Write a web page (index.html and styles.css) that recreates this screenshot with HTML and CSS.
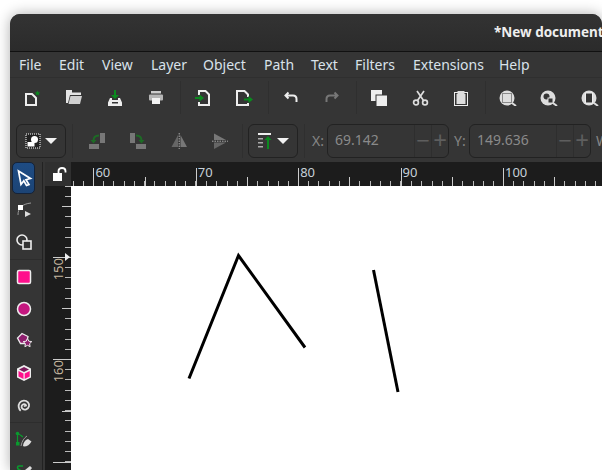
FILE: index.html
```html
<!DOCTYPE html>
<html lang="en">
<head>
  <meta charset="UTF-8">
  <title>New document - Inkscape</title>
  <link rel="stylesheet" href="styles.css">
</head>
<body>

<div class="window">

  <div class="titlebar">*New document 1 - Inkscape</div>

  <div class="menubar">
    <span>File</span><span>Edit</span><span>View</span><span>Layer</span><span>Object</span><span>Path</span><span>Text</span><span>Filters</span><span>Extensions</span><span>Help</span>
  </div>

  <!-- command bar -->
  <div class="commands">
    <button class="cmd"><svg width="18" height="18" viewBox="1.500 0 18 18"><path d="M3.500 6h6l4 4v7h-10z" fill="none" stroke="#eee" stroke-width="2"/><path d="M15 2.500l.8 1.700 1.900.2-1.400 1.300.4 1.900-1.700-1-1.700 1 .4-1.900-1.400-1.300 1.900-.2z" fill="#0a8a1e"/></svg></button>
    <button class="cmd"><svg width="18" height="18" viewBox="0 0 18 18"><path d="M1 2h6v2.500h9V7H5L3 15H1z" fill="#e4e4e4"/><path d="M5.500 8H17l-2 8H3.500z" fill="#cfcfcf"/></svg></button>
    <button class="cmd"><svg width="18" height="18" viewBox="0 0 18 18"><path d="M4 10h2v2h6v-2h2l2 4.500V18H2v-3.500z" fill="#eee"/><rect x="6" y="14" width="6" height="1.500" fill="#353535"/><path d="M8 2h2v5h3l-4 4-4-4h3z" fill="#0a8a1e"/></svg></button>
    <button class="cmd"><svg width="18" height="18" viewBox="0 0 18 18"><rect x="4" y="3" width="10" height="2.500" fill="#ccc"/><rect x="2" y="6.500" width="14" height="6" rx="1" fill="#b5b5b5"/><rect x="5" y="10" width="8" height="6" fill="#f2f2f2"/></svg></button>
    <i class="sep"></i>
    <button class="cmd"><svg width="18" height="18" viewBox="0 0 18 18"><path d="M5 7V3h6.500L15 6.500V17H5v-3" fill="none" stroke="#eee" stroke-width="2"/><path d="M1 9h4.500V6.500L10 10l-4.500 3.500V11H1z" fill="#0a8a1e"/></svg></button>
    <button class="cmd"><svg width="18" height="18" viewBox="0 0 18 18"><path d="M13 9V6.500L9.500 3H2v14h11v-2" fill="none" stroke="#eee" stroke-width="2"/><path d="M9 10.500h4.500V8l4.500 3.500-4.500 3.500v-2.500H9z" fill="#0a8a1e"/></svg></button>
    <i class="sep"></i>
    <button class="cmd"><svg width="18" height="18" viewBox="0 0 18 18"><path d="M6.500 4.500L3.500 7.500l3 3M3.500 7.500H11c2.200 0 3.500 1.500 3.500 3.500v3" fill="none" stroke="#eee" stroke-width="2"/></svg></button>
    <button class="cmd"><svg width="18" height="18" viewBox="0 0 18 18"><path d="M11.500 4.500l3 3-3 3M14.500 7.500H7C4.800 7.500 3.500 9 3.500 11v3" fill="none" stroke="#777" stroke-width="2"/></svg></button>
    <i class="sep"></i>
    <button class="cmd"><svg width="18" height="18" viewBox="0 0 18 18"><rect x="1" y="2" width="11" height="11" fill="#eee"/><rect x="6" y="7" width="11.500" height="11.500" fill="#eee" stroke="#353535"/></svg></button>
    <button class="cmd"><svg width="18" height="18" viewBox="0 0 18 18"><g fill="none" stroke="#ddd" stroke-width="1.700"><circle cx="5" cy="14.500" r="2.400"/><circle cx="14" cy="14.500" r="2.400"/><path d="M6.500 12.500L13 3M12.500 12.500L6 3"/></g></svg></button>
    <button class="cmd"><svg width="18" height="18" viewBox="0 0 18 18"><rect x="2.500" y="4.500" width="13" height="13" fill="none" stroke="#eee"/><rect x="4.500" y="6" width="9" height="10" fill="#ddd"/><rect x="5.500" y="3" width="7" height="3" fill="#ddd"/></svg></button>
    <i class="sep"></i>
    <button class="cmd"><svg width="18" height="18" viewBox="0 0 18 18"><circle cx="8" cy="10" r="7.500" fill="#ddd"/><path d="M13 15l4 3" stroke="#ddd" stroke-width="2"/><rect x="3.500" y="5.500" width="9" height="9" fill="none" stroke="#353535" stroke-dasharray="1 1"/></svg></button>
    <button class="cmd"><svg width="18" height="18" viewBox="0 0 18 18"><circle cx="8" cy="10" r="7.500" fill="#ddd"/><path d="M13 15l4 3" stroke="#ddd" stroke-width="2"/><circle cx="6.500" cy="8.500" r="3" fill="#353535"/><rect x="8" y="10" width="5" height="5" fill="#353535" stroke="#ddd"/></svg></button>
    <button class="cmd"><svg width="18" height="18" viewBox="0 0 18 18"><circle cx="8" cy="10" r="7.500" fill="#ddd"/><path d="M13 15l4 3" stroke="#ddd" stroke-width="2"/><rect x="4.500" y="5" width="7" height="10" fill="#353535" stroke="#eee"/></svg></button>
  </div>

  <!-- tool controls -->
  <div class="controls">
    <div class="dropbox">
      <svg width="16" height="16" viewBox="0 0 16 16"><rect x="1" y="1" width="14" height="14" fill="#222" stroke="#fff" stroke-dasharray="1 1"/><circle cx="9.500" cy="6.500" r="3.500" fill="#fff"/><rect x="2.500" y="9" width="7" height="4.500" fill="#fff"/></svg>
      <i class="caret"></i>
    </div>
    <i class="sep"></i>
    <button class="ctl"><svg width="18" height="18" viewBox="0 0 18 18"><rect x="12" y="1" width="5" height="10" fill="#777"/><rect x="1" y="12" width="10" height="5" fill="#777"/><path d="M11 3.500C7.500 3.500 5.500 5.500 5.500 8.500" fill="none" stroke="#1d6b25" stroke-width="2"/><path d="M2.500 8h6l-3 3.500z" fill="#1d6b25"/></svg></button>
    <button class="ctl"><svg width="18" height="18" viewBox="0 0 18 18"><rect x="1" y="1" width="5" height="10" fill="#777"/><rect x="7" y="12" width="10" height="5" fill="#777"/><path d="M7 3.500c3.500 0 5.500 2 5.500 5" fill="none" stroke="#1d6b25" stroke-width="2"/><path d="M9.500 8h6l-3 3.500z" fill="#1d6b25"/></svg></button>
    <button class="ctl"><svg width="18" height="18" viewBox="0 0 18 18"><path d="M1.500 15L8 3v12z" fill="#666"/><path d="M10.500 3L17 15h-6.500z" fill="#777"/><path d="M9.200 1v16" stroke="#aaa" stroke-dasharray="1.500 1"/></svg></button>
    <button class="ctl"><svg width="18" height="18" viewBox="0 0 18 18"><path d="M3 1.500l12 6.500H3z" fill="#777"/><path d="M3 10.500h12L3 17z" fill="#666"/><path d="M1 9.200h16" stroke="#aaa" stroke-dasharray="1.500 1"/></svg></button>
    <i class="sep"></i>
    <div class="dropbox">
      <svg width="16" height="16" viewBox="0 0 16 16"><rect x="1" y="0" width="13" height="2" fill="#eee"/><path d="M1 5h5v1.500H1zM1 9h5v1.500H1zM1 13h5v1.500H1z" fill="#aaa"/><path d="M10 16V7H7.500L11 3l3.500 4H12v9z" fill="#0a8a1e"/></svg>
      <i class="caret"></i>
    </div>
    <i class="sep"></i>
    <label class="coord">X:</label>
    <div class="spin"><span class="val">69.142</span><span class="step">&minus;</span><span class="step">+</span></div>
    <label class="coord">Y:</label>
    <div class="spin"><span class="val">149.636</span><span class="step">&minus;</span><span class="step">+</span></div>
    <label class="coord">W:</label>
  </div>

  <div class="workspace">

    <!-- toolbox -->
    <div class="toolbox">
      <button class="tool active"><svg width="18" height="18" viewBox="0 0 18 18"><path d="M3.500 2l12 7.500-4.500 1.200 3 4.800-2.500 1-2.700-4.700L6 15.500z" fill="#1f4d85" stroke="#fff" stroke-width="1.700"/></svg></button>
      <button class="tool"><svg width="18" height="18" viewBox="0 0 18 18"><path d="M3 14C3 7 7 3 16 2" fill="none" stroke="#999"/><rect x="3" y="4" width="5" height="5" fill="#fff"/><path d="M10 10l6 3-6 3z" fill="#ddd"/></svg></button>
      <button class="tool"><svg width="18" height="18" viewBox="0 0 18 18"><circle cx="7" cy="7" r="5" fill="none" stroke="#eee" stroke-width="1.600"/><rect x="8" y="8" width="8" height="8" fill="#353535" stroke="#eee" stroke-width="1.600"/></svg></button>
      <i class="tool-sep"></i>
      <button class="tool"><svg width="18" height="18" viewBox="0 0 18 18"><rect x="2.500" y="2.500" width="13" height="13" rx="1.500" fill="#ff0f8c" stroke="#eee" stroke-width="1.500"/></svg></button>
      <button class="tool"><svg width="18" height="18" viewBox="0 0 18 18"><circle cx="9" cy="9" r="6.500" fill="#c4177f" stroke="#eee" stroke-width="1.500"/></svg></button>
      <button class="tool"><svg width="18" height="18" viewBox="0 0 18 18"><path d="M7 1.500l6 3-1.500 7h-6L2.500 6z" fill="#8f1f6e" stroke="#eee" stroke-width="1.300"/><path d="M12.500 6.500l1.300 2.700 3 .4-2.200 2.100.5 3-2.600-1.400-2.600 1.400.5-3L8.200 9.600l3-.4z" fill="#8f1f6e" stroke="#eee"/></svg></button>
      <button class="tool"><svg width="18" height="18" viewBox="0 0 18 18"><path d="M9 1l7 3.500v9L9 17l-7-3.500v-9z" fill="#eee"/><path d="M9 3L14 5.500 9 8 4 5.500z" fill="#7d1a5c"/><path d="M3.500 7l5 2.500v5.500l-5-2.500z" fill="#ff0f8c"/><path d="M9.700 9.500l5-2.500v5.500l-5 2.500z" fill="#ff0f8c"/></svg></button>
      <button class="tool"><svg width="18" height="18" viewBox="0 0 18 18"><path d="M9 10.500c1-1.500 2.500-.5 2-1.300-.6-1.500-3.500-1.400-4.300.6-.8 2.500 1.800 4.400 4.500 3.500 3-1 3.800-4.800 1.800-7-2.300-2.500-6.300-2.300-8.300.4-2 2.800-1 6.300 1 8" fill="none" stroke="#ddd" stroke-width="1.800"/></svg></button>
      <i class="tool-sep"></i>
      <button class="tool"><svg width="18" height="18" viewBox="0 0 18 18"><path d="M2.500 3v10M3 3c2 0 3 2 5 3" fill="none" stroke="#0a9a2e" stroke-width="1.200"/><circle cx="2.500" cy="2.500" r="1.800" fill="#0a9a2e"/><rect x="1" y="11" width="3.500" height="3.500" fill="#0a9a2e"/><path d="M8 15c0-3 2-6 5-7l3.500 2.500C15 13.500 12 15.500 9 15.500z" fill="#ddd"/><path d="M6 15C7 10 9 7 12 5" fill="none" stroke="#999"/></svg></button>
      <button class="tool"><svg width="18" height="18" viewBox="0 0 18 18"><path d="M8 3H4c-2 0-2 3 0 3.500s2 3.500 0 3.500H1" fill="none" stroke="#0a9a2e" stroke-width="1.600"/><path d="M10 7l5-4 2 2-4 5z" fill="#ddd"/></svg></button>
    </div>

    <div class="board">

      <div class="top-row">
        <div class="lock">
          <svg width="14" height="14" viewBox="0 0 14 14"><rect x="0" y="6" width="9" height="8" fill="#fff"/><path d="M5.500 6V4C5.500 2 7 1 9 1s3.500 1 3.500 3v1.500" fill="none" stroke="#fff" stroke-width="1.800"/></svg>
        </div>
        <div class="h-ruler">
          <div class="h-cell"></div>
          <div class="h-cell">60</div>
          <div class="h-cell">70</div>
          <div class="h-cell">80</div>
          <div class="h-cell">90</div>
          <div class="h-cell">100</div>
        </div>
      </div>

      <div class="main-row">
        <div class="v-ruler">
          <div class="v-cell"></div>
          <div class="v-cell"><span>150</span></div>
          <div class="v-cell"><span>160</span></div>
          <div class="v-cell"></div>
          <i class="pointer"></i>
        </div>
        <div class="canvas">
          <svg class="drawing" width="531" height="284" viewBox="0 0 531 284">
            <path d="M118 192.500L167.500 69.500 234 161.500" />
            <path d="M302.500 84L327 206" />
          </svg>
        </div>
      </div>

    </div>
  </div>
</div>

</body>
</html>
```

FILE: styles.css
```css
html, body { margin: 0; height: 470px; overflow: hidden; background: #fff; }
body { font-family: "Noto Sans", sans-serif; color: #ddd; }
button { border: 0; padding: 0; background: none; }
svg { display: block; }
i { display: block; }

.window {
  width: 592px; height: 456px; margin: 14px 0 0 10px;
  background: #353535; border-radius: 10px 10px 0 0; overflow: hidden;
  box-shadow: 0 0 14px rgba(0,0,0,.32);
}

.titlebar {
  height: 37px; line-height: 37px; padding-left: 484px; overflow: hidden;
  background: linear-gradient(#333, #2b2b2b); border-bottom: 1px solid #111;
  font-size: 13.5px; font-weight: 700; color: #eee; white-space: nowrap;
}

.menubar {
  display: grid; height: 25px; padding-left: 9px; line-height: 25px;
  grid-template-columns: 40px 43px 49px 52px 61px 47px 44px 58px 86px 50px;
  border-bottom: 1px solid #2f2f2f; font-size: 14px; color: #d9e2ea;
}

.commands { display: flex; height: 38px; padding-left: 2.5px; align-items: center; overflow: hidden; }
.cmd { flex: none; width: 41px; height: 38px; display: flex; align-items: center; justify-content: center; }
.sep { flex: none; width: 1px; height: 33px; margin: 0 2px 0 3px; background: #2f2f2f; }

.controls { display: flex; height: 46px; box-sizing: border-box; padding: 4px 0 0 6px; align-items: center; overflow: hidden; }
.controls .sep { margin: 0 7px 0 6px; height: 34px; }
.controls .dropbox:first-child + .sep { margin-right: 3px; }
.controls .ctl + .sep { margin: 0 5px 0 2px; }
.dropbox {
  flex: none; width: 50px; height: 34px; display: flex; align-items: center; gap: 4px; padding-left: 8px;
  box-sizing: border-box; border: 1px solid #222; border-radius: 6px;
}
.caret { width: 0; height: 0; border: 6px solid transparent; border-top: 6px solid #f2f2f2; border-bottom: 0; }
.ctl { flex: none; width: 41px; height: 34px; display: flex; align-items: center; justify-content: center; }
.coord { flex: none; width: 15px; margin-top: -2px; font-size: 14px; color: #858585; white-space: nowrap; }
.spin {
  flex: none; display: flex; width: 122px; height: 34px; box-sizing: border-box; margin-right: 5px;
  border: 1px solid #222; border-radius: 6px; font-size: 14px; color: #8a8a8a; line-height: 30px;
}
.spin .val { flex: 1; padding-left: 7px; }
.spin .step { width: 16px; border-left: 1px solid #2e2e2e; text-align: center; font-size: 24px; color: #5e5e5e; }

.workspace { display: flex; height: 308px; }

.toolbox { flex: none; width: 33px; height: 308px; overflow: hidden; box-sizing: border-box; border-right: 1px solid #222; }
.tool { display: flex; width: 23px; height: 32px; margin-left: 2px; box-sizing: border-box; align-items: center; justify-content: center; border-radius: 5px; }
.tool.active { background: linear-gradient(#1e4c84, #1c4475); border: 1px solid #14233a; }
.tool-sep { height: 1px; margin: 1px 0; background: #2d2d2d; }

.board { flex: 1; margin-left: 2px; display: flex; flex-direction: column; min-width: 0; }

.top-row { display: flex; height: 24px; }
.lock { flex: none; width: 26px; padding: 5px 0 0 8px; box-sizing: border-box; background: #303030; }
.h-ruler { flex: 1; display: flex; overflow: hidden; background: #1c1c1c; }
.h-cell {
  flex: none; width: 102.4px; padding: 3px 0 0 2px; box-sizing: border-box;
  font-size: 13px; line-height: 14px; color: #c6d0d8;
  background:
    linear-gradient(#ccc, #ccc) 0 100% / 1px 18px no-repeat,
    linear-gradient(#ccc, #ccc) 51.2px 100% / 1px 9px no-repeat,
    repeating-linear-gradient(90deg, #bbb 0 1px, transparent 1px 10.24px) 0 100% / 100% 5px no-repeat;
}
.h-cell:first-child { margin-left: -80px; }

.main-row { flex: 1; display: flex; min-height: 0; }
.v-ruler { position: relative; flex: none; width: 26px; overflow: hidden; background: #1c1c1c; }
.v-cell {
  height: 102.4px; padding: 1px 0 0 7px; box-sizing: border-box;
  background:
    linear-gradient(#ccc, #ccc) 100% 0 / 18px 1px no-repeat,
    linear-gradient(#ccc, #ccc) 100% 51.2px / 9px 1px no-repeat,
    repeating-linear-gradient(180deg, #bbb 0 1px, transparent 1px 10.24px) 100% 0 / 6px 100% no-repeat;
}
.v-cell:first-child { margin-top: -31.4px; }
.v-cell span {
  display: block; writing-mode: vertical-rl; transform: rotate(180deg);
  font-size: 13px; line-height: 12px; color: #c6b8a0;
}
.pointer {
  position: absolute; top: 67px; right: 1px; width: 0; height: 0;
  border: 4px solid transparent; border-left: 5px solid #eee; border-right: 0;
}

.canvas { flex: 1; background: #fff; overflow: hidden; }
.drawing path { fill: none; stroke: #000; stroke-width: 3; }
```
